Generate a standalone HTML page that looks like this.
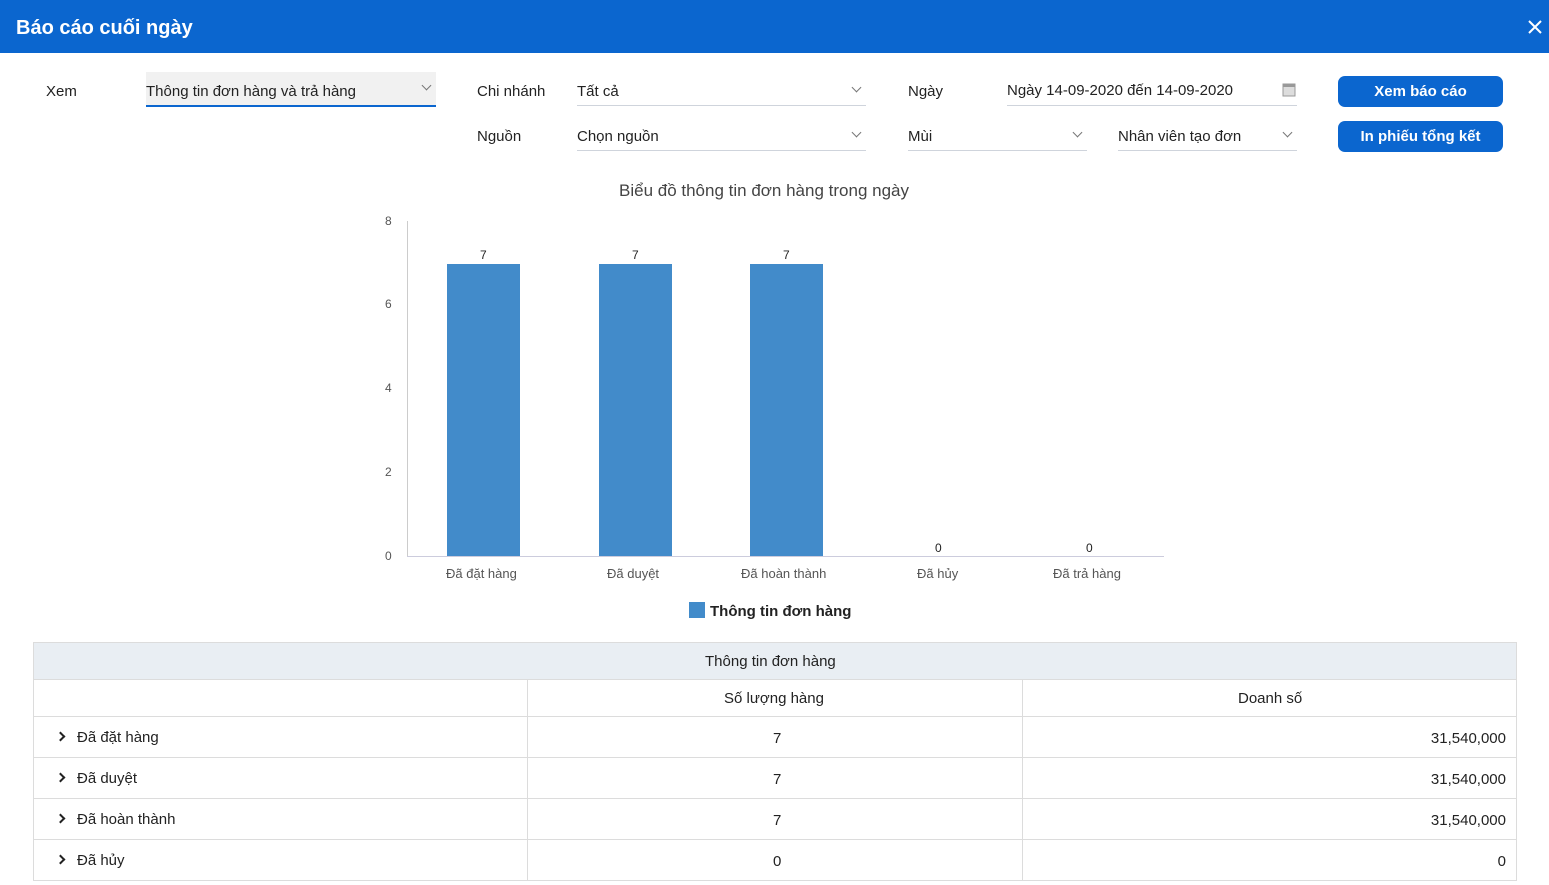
<!DOCTYPE html><html><head><meta charset="utf-8"><style>
*{margin:0;padding:0;box-sizing:border-box}
body{width:1549px;height:885px;overflow:hidden;background:#fff;font-family:"Liberation Sans","DejaVu Sans",sans-serif;color:#222;position:relative;font-size:15px}
.a{position:absolute;white-space:nowrap}
.hdr{left:0;top:0;width:1549px;height:53px;background:#0b66cf}
.lbl{font-size:15px;color:#222}
.fld{border-bottom:1px solid #cfd4dc;height:30px}
.chev{position:absolute;right:6px;top:8px;width:7px;height:7px;border-right:1.3px solid #777;border-bottom:1.3px solid #777;transform:rotate(45deg)}
.btn{background:#0b66cf;color:#fff;border-radius:7px;font-weight:bold;text-align:center;font-size:15px;line-height:31px;height:31px;width:165px}
.tk{font-size:12px;color:#555}
.bar{background:#428bca}
.cell{border:1px solid #dcdcdc;position:absolute}
.ar{position:absolute;width:7px;height:7px;border-right:2px solid #222;border-bottom:2px solid #222;transform:rotate(-45deg)}
</style></head><body>
<div class="a hdr"></div>
<div class="a" style="left:16px;top:17px;color:#fff;font-size:20px;font-weight:bold">Báo cáo cuối ngày</div>
<svg class="a" style="left:1528px;top:20px" width="14" height="14"><path d="M1 1L13 13M13 1L1 13" stroke="#fff" stroke-width="2"/></svg>

<div class="a lbl" style="left:46px;top:83px">Xem</div>
<div class="a" style="left:146px;top:72px;width:290px;height:35px;background:#f1f1f1;border-bottom:2px solid #0b66cf"><span class="a" style="left:0;top:11px">Thông tin đơn hàng và trả hàng</span><i class="chev" style="top:10px"></i></div>

<div class="a lbl" style="left:477px;top:83px">Chi nhánh</div>
<div class="a fld" style="left:577px;top:76px;width:289px"><span class="a" style="left:0;top:7px">Tất cả</span><i class="chev"></i></div>
<div class="a lbl" style="left:477px;top:128px">Nguồn</div>
<div class="a fld" style="left:577px;top:121px;width:289px"><span class="a" style="left:0;top:7px">Chọn nguồn</span><i class="chev"></i></div>

<div class="a lbl" style="left:908px;top:83px">Ngày</div>
<div class="a fld" style="left:1007px;top:76px;width:290px"><span class="a" style="left:0;top:6px">Ngày 14-09-2020 đến 14-09-2020</span>
<svg class="a" style="left:275px;top:6px" width="14" height="15"><rect x="1" y="2" width="12" height="12" fill="#ddd" stroke="#999"/><rect x="1" y="2" width="12" height="3" fill="#999"/></svg></div>
<div class="a fld" style="left:908px;top:121px;width:179px"><span class="a" style="left:0;top:7px">Mùi</span><i class="chev"></i></div>
<div class="a fld" style="left:1118px;top:121px;width:179px"><span class="a" style="left:0;top:7px">Nhân viên tạo đơn</span><i class="chev"></i></div>

<div class="a btn" style="left:1338px;top:76px">Xem báo cáo</div>
<div class="a btn" style="left:1338px;top:121px">In phiếu tổng kết</div>

<div class="a" style="left:619px;top:181px;font-size:17px;color:#444">Biểu đồ thông tin đơn hàng trong ngày</div>
<div class="a" style="left:407px;top:221px;width:1px;height:335px;background:#ccc"></div>
<div class="a" style="left:407px;top:556px;width:757px;height:1px;background:#ccd"></div>
<div class="a tk" style="left:385px;top:214px">8</div>
<div class="a tk" style="left:385px;top:297px">6</div>
<div class="a tk" style="left:385px;top:381px">4</div>
<div class="a tk" style="left:385px;top:465px">2</div>
<div class="a tk" style="left:385px;top:549px">0</div>
<div class="a bar" style="left:447px;top:264px;width:73px;height:292px"></div>
<div class="a bar" style="left:599px;top:264px;width:73px;height:292px"></div>
<div class="a bar" style="left:750px;top:264px;width:73px;height:292px"></div>
<div class="a tk" style="left:480px;top:248px;color:#222">7</div>
<div class="a tk" style="left:632px;top:248px;color:#222">7</div>
<div class="a tk" style="left:783px;top:248px;color:#222">7</div>
<div class="a tk" style="left:935px;top:541px;color:#222">0</div>
<div class="a tk" style="left:1086px;top:541px;color:#222">0</div>
<div class="a tk" style="left:446px;top:566px;font-size:13px">Đã đặt hàng</div>
<div class="a tk" style="left:607px;top:566px;font-size:13px">Đã duyệt</div>
<div class="a tk" style="left:741px;top:566px;font-size:13px">Đã hoàn thành</div>
<div class="a tk" style="left:917px;top:566px;font-size:13px">Đã hủy</div>
<div class="a tk" style="left:1053px;top:566px;font-size:13px">Đã trả hàng</div>
<div class="a bar" style="left:689px;top:602px;width:16px;height:16px"></div>
<div class="a" style="left:710px;top:603px;font-weight:bold;font-size:15px">Thông tin đơn hàng</div>

<div class="cell" style="left:33px;top:642px;width:1484px;height:38px;background:#e9eef3"></div>
<div class="a" style="left:705px;top:653px">Thông tin đơn hàng</div>
<div class="cell" style="left:33px;top:679px;width:495px;height:38px"></div>
<div class="cell" style="left:527px;top:679px;width:496px;height:38px"></div>
<div class="cell" style="left:1022px;top:679px;width:495px;height:38px"></div>
<div class="a" style="left:724px;top:690px">Số lượng hàng</div>
<div class="a" style="left:1238px;top:690px">Doanh số</div>
<div class="cell" style="left:33px;top:716px;width:495px;height:42px"></div><div class="cell" style="left:527px;top:716px;width:496px;height:42px"></div><div class="cell" style="left:1022px;top:716px;width:495px;height:42px"></div>
<div class="cell" style="left:33px;top:757px;width:495px;height:42px"></div><div class="cell" style="left:527px;top:757px;width:496px;height:42px"></div><div class="cell" style="left:1022px;top:757px;width:495px;height:42px"></div>
<div class="cell" style="left:33px;top:798px;width:495px;height:42px"></div><div class="cell" style="left:527px;top:798px;width:496px;height:42px"></div><div class="cell" style="left:1022px;top:798px;width:495px;height:42px"></div>
<div class="cell" style="left:33px;top:839px;width:495px;height:42px"></div><div class="cell" style="left:527px;top:839px;width:496px;height:42px"></div><div class="cell" style="left:1022px;top:839px;width:495px;height:42px"></div>
<i class="ar" style="left:57px;top:733px"></i><div class="a" style="left:77px;top:729px">Đã đặt hàng</div>
<i class="ar" style="left:57px;top:774px"></i><div class="a" style="left:77px;top:770px">Đã duyệt</div>
<i class="ar" style="left:57px;top:815px"></i><div class="a" style="left:77px;top:811px">Đã hoàn thành</div>
<i class="ar" style="left:57px;top:856px"></i><div class="a" style="left:77px;top:852px">Đã hủy</div>
<div class="a" style="left:773px;top:730px">7</div><div class="a" style="left:773px;top:771px">7</div><div class="a" style="left:773px;top:812px">7</div><div class="a" style="left:773px;top:853px">0</div>
<div class="a" style="right:43px;top:730px">31,540,000</div><div class="a" style="right:43px;top:771px">31,540,000</div><div class="a" style="right:43px;top:812px">31,540,000</div><div class="a" style="right:43px;top:853px">0</div>
</body></html>
